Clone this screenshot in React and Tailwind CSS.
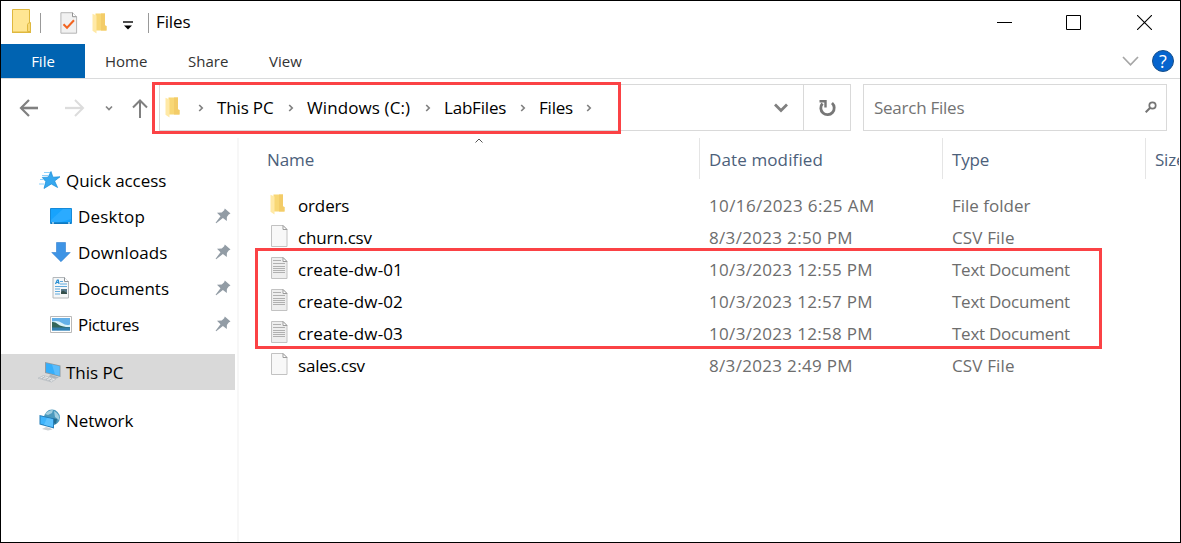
import React from "react";

const files = [
  { name: "orders", date: "10/16/2023 6:25 AM", type: "File folder", icon: "folder", track: "tracking-[-0.15px]", dateTrack: "tracking-[0.38px]", typeTrack: "tracking-[0px]" },
  { name: "churn.csv", date: "8/3/2023 2:50 PM", type: "CSV File", icon: "blank", track: "tracking-[-0.2px]", dateTrack: "tracking-[0.32px]", typeTrack: "tracking-[0.15px]" },
  { name: "create-dw-01", date: "10/3/2023 12:55 PM", type: "Text Document", icon: "text", track: "tracking-[0.1px]", dateTrack: "tracking-[0.32px]", typeTrack: "tracking-[-0.25px]" },
  { name: "create-dw-02", date: "10/3/2023 12:57 PM", type: "Text Document", icon: "text", track: "tracking-[0.1px]", dateTrack: "tracking-[0.32px]", typeTrack: "tracking-[-0.25px]" },
  { name: "create-dw-03", date: "10/3/2023 12:58 PM", type: "Text Document", icon: "text", track: "tracking-[0.1px]", dateTrack: "tracking-[0.32px]", typeTrack: "tracking-[-0.25px]" },
  { name: "sales.csv", date: "8/3/2023 2:49 PM", type: "CSV File", icon: "blank", track: "tracking-[-0.2px]", dateTrack: "tracking-[0.32px]", typeTrack: "tracking-[0.15px]" },
];

function FolderIcon({ className }) {
  return (
    <svg viewBox="0 0 16 21" className={className}>
      <path d="M3.500 .5H13V12.500L14.500 13V17.500H3.500Z" fill="#f8d775" />
      <path d="M9 .5h4v12l1.500.5v4.500H9Z" fill="#f3cc68" />
      <path d="M.5 .7 4.500 2.500V20.500L.5 17.800Z" fill="#ffe9a6" />
    </svg>
  );
}

function PageIcon({ lines }) {
  return (
    <svg viewBox="0 0 18 22" className="h-[22px] w-[18px]">
      <path d="M1.500 .5H13L17 4.500V21.500H1.500Z" fill={lines ? "#eeeeee" : "#f8f8f8"} stroke="#c2c2c2" />
      <path d="M13 .5V4.500H17Z" fill="#ffffff" stroke="#9c9c9c" />
      {lines && (
        <path d="M3 3.500H11M3 6.500H15M3 9.500H15M3 11.500H15M3 13.500H15M3 15.500H15" stroke="#b0b0b0" />
      )}
    </svg>
  );
}

function TitleFolder() {
  return (
    <svg viewBox="0 0 20 25" className="h-[25px] w-5">
      <path d="M.5 .5H17.500V14L18.500 15V23.500H.5Z" fill="#ffe693" stroke="#dfb83e" />
      <path d="M0 22.500H19V24H0Z" fill="#dfb83e" />
      <path d="M15.500 15.500Q15.500 14 18.500 13.500V22.500H15.500Z" fill="#f8d978" stroke="#dfb83e" />
    </svg>
  );
}

function CheckPage() {
  return (
    <svg viewBox="0 0 18 22" className="h-[22px] w-[18px]">
      <path d="M.9 .7H12.500L16.600 4.700V21.200H.9Z" fill="#f1f1f1" stroke="#b5b5b5" />
      <path d="M12.500 .7V4.700H16.600" fill="#fff" stroke="#929292" />
      <path d="M3.500 12.200 7 15.800 14 8.200" fill="none" stroke="#f26522" strokeWidth="2" />
    </svg>
  );
}

function Crumb({ className }) {
  return (
    <svg viewBox="0 0 6 8" className={`h-2 w-1.5 shrink-0 ${className}`}>
      <path d="M1.200 1 4.200 4 1.200 7" fill="none" stroke="#808080" strokeWidth="1.700" />
    </svg>
  );
}

function Pin() {
  return (
    <svg viewBox="0 0 16 16" className="h-4 w-4">
      <path d="M9.800 .4 15.500 5.400 13.700 6.400 11.900 9 11.800 13 7.900 10.100 1.200 15.200 .6 14.700 5.500 8.200 2 4.700 6.700 4.400 9.200 2.300Z" fill="#929ca5" />
    </svg>
  );
}

function StarIcon() {
  return (
    <svg viewBox="0 0 22 20" className="h-5 w-[22px]">
      <path d="M12 1.500 13.900 7.200 21 6.800 15.600 11 18.600 17.500 12.300 14 5 18.500 6.800 11.600 3.300 7.400 9 7.200Z" fill="#36a8ef" stroke="#168bd7" strokeWidth=".7" />
      <path d="M5 2.500H11M3 5.500H9.500M1 9.500H5M0 14H5" stroke="#8ed1fa" strokeWidth="1" />
    </svg>
  );
}

function DesktopIcon() {
  return (
    <svg viewBox="0 0 22 16" className="h-4 w-[22px]">
      <path d="M.5 .5H21.500V15.500H.5Z" fill="#17a3fd" stroke="#168ad8" />
      <path d="M13 1H21V11L8 15H1V12Z" fill="#2babff" />
      <path d="M1 15H21" stroke="#0767a7" />
      <path d="M2 15H4M18 15H20" stroke="#fff" />
    </svg>
  );
}

function DownIcon() {
  return (
    <svg viewBox="0 0 20 20" className="h-5 w-5">
      <path d="M5.500 .5H14.500V10.500H19.200L10 19.700 .8 10.500H5.500Z" fill="#3e94e5" stroke="#2f7fd0" strokeWidth=".6" />
    </svg>
  );
}

function DocumentIcon() {
  return (
    <svg viewBox="0 0 18 22" className="h-[22px] w-[18px]">
      <path d="M1 .5H12.500L16.500 4.500V21H1Z" fill="#f5f7f8" stroke="#b4b8bb" />
      <path d="M12.500 .5V4.500H16.500" fill="#fff" stroke="#8d9398" />
      <path d="M3.500 7 5.300 3.200H6.300L7 7M4.500 5.500H7" fill="none" stroke="#278ed2" strokeWidth="1.200" />
      <path d="M8 4.500H11M8 7H15M3 9.500H15M3 12H8M3 14.500H8M3 17H8" stroke="#60aadd" />
      <path d="M9 12H15V17H9Z" fill="#557789" />
      <path d="M9 15 11 13.500 15 16V17H9Z" fill="#344f4a" />
    </svg>
  );
}

function PictureIcon() {
  return (
    <svg viewBox="0 0 22 17" className="h-[17px] w-[22px]">
      <path d="M.5 .5H21.500V16.500H.5Z" fill="#fff" stroke="#b9b9b9" />
      <path d="M2 2H20V14.500H2Z" fill="#64b0e8" />
      <path d="M2 5.500Q8 4 12 7T20 8.500V11H2Z" fill="#d9f1f9" />
      <path d="M2 6Q5 5.500 8 8.200T20 11.300V12H2Z" fill="#32665a" />
      <path d="M2 11.500H20V14.500H2Z" fill="#327fae" />
    </svg>
  );
}

function ComputerIcon() {
  return (
    <svg viewBox="0 0 23 22" className="h-[22px] w-[23px]">
      <path d="M7 1 22.500 4.500V16L7 12Z" fill="#8f9ba3" />
      <path d="M8 2 21.500 5.200V14.700L8 11.200Z" fill="#35aefa" />
      <path d="M14 3.500 21.500 5.200V14.700L17 13.500Z" fill="#5bbcfb" />
      <path d="M12 13.500 18 15.500 21 16.500 17 18 11 16Z" fill="#aeb5ba" />
      <path d="M5.500 14.500 18 18 13.500 21 0 17.200Z" fill="#e7e9eb" stroke="#b5babe" strokeWidth=".7" />
      <path d="M4 16 15 19.200M2 17 13 20.200M7 15 4 18M11 16 8 19M14 17 11 20" stroke="#b0b6ba" strokeWidth=".7" />
    </svg>
  );
}

function NetworkIcon() {
  return (
    <svg viewBox="0 0 22 22" className="h-[22px] w-[22px]">
      <circle cx="13" cy="8.500" r="7.900" fill="#4b99bd" />
      <path d="M6 5Q10 1 14 1L13 4 9 6ZM15 2Q21 5 20 11L16 8Z" fill="#a3cfe0" />
      <path d="M13 9 18 10 17 15 14 14Z" fill="#236d91" />
      <path d="M.5 6 15 9.500V19.500L.5 15.500Z" fill="#257fba" />
      <path d="M1.500 7.200 14 10.300V18L1.500 14.800Z" fill="#3eb4fc" />
      <path d="M8 9 14 10.300V18L5 15.700Z" fill="#5cc2ff" />
      <path d="M7 18 11 19 13.500 20.500 9 21.500 3 20Z" fill="#ccd1d4" />
    </svg>
  );
}

function SideItem({ icon, label, track, indent, pin, selected }) {
  return (
    <div className={`flex h-9 w-[234px] items-center ${selected ? "bg-[#d9d9d9]" : ""} ${indent ? "pl-[48px]" : "pl-[37px]"}`}>
      <span className={`flex shrink-0 items-center justify-center ${indent ? "w-6" : "w-[23px]"}`}>{icon}</span>
      <span className={`ml-[5px] pt-px whitespace-nowrap text-black ${track}`}>{label}</span>
      {pin && <span className="mr-[4px] ml-auto"><Pin /></span>}
    </div>
  );
}

function TitleBar() {
  return (
    <header className="flex h-[43px] shrink-0 items-center">
      <div className="mb-[3px] ml-[11px]"><TitleFolder /></div>
      <div className="ml-[8px] h-5 w-px bg-[#999]" />
      <div className="ml-[19px]"><CheckPage /></div>
      <FolderIcon className="mt-0.5 ml-[14px] h-[21px] w-4" />
      <svg viewBox="0 0 10 9" className="mt-1.5 ml-[15px] h-[9px] w-2.5">
        <path d="M0 1H10" stroke="#000" strokeWidth="1.400" />
        <path d="M1 4.500H9L5 8.500Z" fill="#000" />
      </svg>
      <div className="ml-[15px] h-5 w-px bg-[#999]" />
      <h1 className="-mt-0.5 ml-[7px] text-[17px] tracking-[-0.1px]">Files</h1>
      <div className="mr-[28px] ml-auto flex items-center gap-[54px]">
        <svg viewBox="0 0 15 15" className="h-[15px] w-[15px]"><path d="M0 7.500H15" stroke="#000" /></svg>
        <svg viewBox="0 0 15 15" className="h-[15px] w-[15px]"><path d="M.5 .5H14.500V14.500H.5Z" fill="none" stroke="#000" /></svg>
        <svg viewBox="0 0 15 15" className="ml-[2px] h-[15px] w-[15px]"><path d="M0 0 15 15M15 0 0 15" stroke="#000" strokeWidth="1.100" /></svg>
      </div>
    </header>
  );
}

function Ribbon() {
  return (
    <nav className="flex h-[35px] shrink-0 items-center border-b border-[#dadbdc] text-[15px] text-[#333]">
      <div className="flex h-[34px] w-[84px] items-center justify-center bg-[#0063b1] text-white">File</div>
      <span className="ml-5 w-[83px]">Home</span>
      <span className="w-[81px]">Share</span>
      <span>View</span>
      <svg viewBox="0 0 17 11" className="mr-[13px] ml-auto h-[11px] w-[17px]">
        <path d="M1 1 8.500 8.800 16 1" fill="none" stroke="#a6a6a6" strokeWidth="1.700" />
      </svg>
      <span className="mr-[6px] flex h-[22px] w-[22px] items-center justify-center rounded-full border border-[#174f8a] bg-[#0564ce] text-[18px] leading-none text-white">?</span>
    </nav>
  );
}

function AddressRow() {
  return (
    <div className="flex h-[59px] shrink-0 items-start pt-[5px]">
      <div className="flex h-[47px] w-[158px] shrink-0 items-center">
        <svg viewBox="0 0 20 18" className="ml-[18px] h-[18px] w-5">
          <path d="M10 1 2 9 10 17" fill="none" stroke="#808080" strokeWidth="2.200" /><path d="M2 9H19" stroke="#808080" strokeWidth="2.600" />
        </svg>
        <svg viewBox="0 0 20 18" className="ml-[26px] h-[18px] w-5">
          <path d="M10 1 18 9 10 17" fill="none" stroke="#dcdcdc" strokeWidth="2" /><path d="M0 9H18" stroke="#dcdcdc" strokeWidth="2.300" />
        </svg>
        <svg viewBox="0 0 8 6" className="ml-[20px] h-1.5 w-2"><path d="M1 1.500 4 4.500 7 1.500" fill="none" stroke="#858585" strokeWidth="1.700" /></svg>
        <svg viewBox="0 0 16 20" className="mt-0.5 ml-[19px] h-5 w-4">
          <path d="M1 8.500 8 1.500 15 8.500M8 2V19" fill="none" stroke="#808080" strokeWidth="2" />
        </svg>
      </div>
      <div className="relative flex h-[47px] w-[692px] shrink-0 items-center border border-[#d9d9d9]">
        <FolderIcon className="ml-[5px] h-[21px] w-4 shrink-0" />
        <Crumb className="ml-[17px]" />
        <span className="ml-[13px] w-[57px] whitespace-nowrap tracking-[-0.15px]">This PC</span>
        <Crumb className="ml-[14px]" />
        <span className="ml-[13px] w-[105px] whitespace-nowrap tracking-[0.1px]">Windows (C:)</span>
        <Crumb className="ml-[13px]" />
        <span className="ml-[13px] w-[63px] whitespace-nowrap tracking-[-0.2px]">LabFiles</span>
        <Crumb className="ml-[13px]" />
        <span className="ml-[13px] w-[34px] whitespace-nowrap tracking-[-0.2px]">Files</span>
        <Crumb className="ml-[13px]" />
        <svg viewBox="0 0 14 10" className="mr-[15px] ml-auto h-2.5 w-3.5"><path d="M1 1.500 7 7.500 13 1.500" fill="none" stroke="#808080" strokeWidth="2.800" /></svg>
        <div className="flex h-full w-[47px] items-center justify-center border-l border-[#d9d9d9]">
          <svg viewBox="0 0 18 18" className="h-[18px] w-[18px]">
            <path d="M4.500 4.500A6.700 6.700 0 1 0 14 4" fill="none" stroke="#777" strokeWidth="2.800" />
            <path d="M1.500 2.200H7.500V8.500" fill="none" stroke="#777" strokeWidth="2.400" />
          </svg>
        </div>
        <div className="pointer-events-none absolute -top-[3px] -left-[8px] h-[52px] w-[469px] border-3 border-[#fb4245]" />
      </div>
      <div className="ml-3 flex h-[47px] w-[304px] shrink-0 items-center border border-[#d9d9d9] pt-px pl-2.5 text-[#737373]">
        <span className="tracking-[-0.25px]">Search Files</span>
        <svg viewBox="0 0 12 12" className="mt-[-3px] mr-[9px] ml-auto h-3 w-3">
          <circle cx="7.500" cy="4.500" r="3.200" fill="none" stroke="#747474" strokeWidth="1.700" />
          <path d="M5.200 6.800 .7 11.300" stroke="#747474" strokeWidth="2" />
        </svg>
      </div>
    </div>
  );
}

export default function App() {
  return (
    <div className="flex h-[543px] w-[1181px] flex-col overflow-hidden border border-black bg-white font-['Open_Sans',sans-serif] text-[17px] leading-6 text-black">
      <TitleBar />
      <Ribbon />
      <AddressRow />
      <div className="flex flex-1">
        <aside className="w-[238px] shrink-0 border-r-2 border-[#f7f7f7] pt-[24px]">
          <SideItem icon={<StarIcon />} label="Quick access" track="tracking-[-0.05px]" />
          <SideItem indent pin icon={<DesktopIcon />} label="Desktop" track="tracking-[0.2px]" />
          <SideItem indent pin icon={<DownIcon />} label="Downloads" track="tracking-[0.1px]" />
          <SideItem indent pin icon={<DocumentIcon />} label="Documents" track="tracking-[0px]" />
          <SideItem indent pin icon={<PictureIcon />} label="Pictures" track="tracking-[-0.35px]" />
          <div className="h-3" />
          <SideItem selected icon={<ComputerIcon />} label="This PC" track="tracking-[0px]" />
          <div className="h-3" />
          <SideItem icon={<NetworkIcon />} label="Network" track="tracking-[-0.05px]" />
        </aside>
        <main className="min-w-0 flex-1">
          <div className="flex h-[41px] items-center text-[#4c607a]">
            <div className="relative flex h-full w-[461px] shrink-0 items-center border-r border-[#e5e5e5] pt-0.5 pl-[28px]">
              <span className="tracking-[-0.1px]">Name</span>
              <svg viewBox="0 0 8 5" className="absolute top-0 left-[236px] h-[5px] w-2"><path d="M.5 4.500 4 1 7.500 4.500" fill="none" stroke="#555" /></svg>
            </div>
            <div className="flex h-full w-[243px] shrink-0 items-center border-r border-[#e5e5e5] pt-0.5 pl-[9px] tracking-[0.12px]">Date modified</div>
            <div className="flex h-full w-[203px] shrink-0 items-center border-r border-[#e5e5e5] pt-0.5 pl-[9px] tracking-[-0.2px]">Type</div>
            <div className="w-[33px] shrink-0 overflow-hidden pt-0.5 pl-[9px] tracking-[-0.2px]">Size</div>
          </div>
          <div className="relative pt-[10px]">
            {files.map((file) => (
              <div key={file.name} className="flex h-8 items-center text-[#6d6d6d]">
                <span className="-mt-0.5 ml-[31px] flex w-[18px] shrink-0 justify-center">
                  {file.icon === "folder" ? <FolderIcon className="mr-0.5 h-[21px] w-4" /> : <PageIcon lines={file.icon === "text"} />}
                </span>
                <span className={`ml-[10px] w-[411px] shrink-0 pt-px text-black ${file.track}`}>{file.name}</span>
                <span className={`w-[243px] shrink-0 pt-px ${file.dateTrack}`}>{file.date}</span>
                <span className={`pt-px whitespace-nowrap ${file.typeTrack}`}>{file.type}</span>
              </div>
            ))}
            <div className="pointer-events-none absolute top-[69px] left-[16px] h-[101px] w-[847px] border-3 border-[#fb4245]" />
          </div>
        </main>
      </div>
    </div>
  );
}
